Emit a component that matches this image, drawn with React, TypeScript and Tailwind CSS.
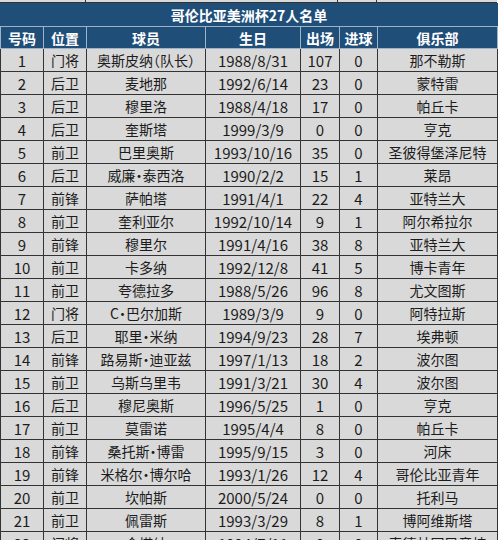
import React from "react";

type Player = [string, string, string, string, string, string, string];

const players: Player[] = [
  ["1", "门将", "奥斯皮纳（队长）", "1988/8/31", "107", "0", "那不勒斯"],
  ["2", "后卫", "麦地那", "1992/6/14", "23", "0", "蒙特雷"],
  ["3", "后卫", "穆里洛", "1988/4/18", "17", "0", "帕丘卡"],
  ["4", "后卫", "奎斯塔", "1999/3/9", "0", "0", "亨克"],
  ["5", "前卫", "巴里奥斯", "1993/10/16", "35", "0", "圣彼得堡泽尼特"],
  ["6", "后卫", "威廉·泰西洛", "1990/2/2", "15", "1", "莱昂"],
  ["7", "前锋", "萨帕塔", "1991/4/1", "22", "4", "亚特兰大"],
  ["8", "前卫", "奎利亚尔", "1992/10/14", "9", "1", "阿尔希拉尔"],
  ["9", "前锋", "穆里尔", "1991/4/16", "38", "8", "亚特兰大"],
  ["10", "前卫", "卡多纳", "1992/12/8", "41", "5", "博卡青年"],
  ["11", "前卫", "夸德拉多", "1988/5/26", "96", "8", "尤文图斯"],
  ["12", "门将", "C·巴尔加斯", "1989/3/9", "9", "0", "阿特拉斯"],
  ["13", "后卫", "耶里·米纳", "1994/9/23", "28", "7", "埃弗顿"],
  ["14", "前锋", "路易斯·迪亚兹", "1997/1/13", "18", "2", "波尔图"],
  ["15", "前卫", "乌斯乌里韦", "1991/3/21", "30", "4", "波尔图"],
  ["16", "后卫", "穆尼奥斯", "1996/5/25", "1", "0", "亨克"],
  ["17", "前卫", "莫雷诺", "1995/4/4", "8", "0", "帕丘卡"],
  ["18", "前锋", "桑托斯·博雷", "1995/9/15", "3", "0", "河床"],
  ["19", "前锋", "米格尔·博尔哈", "1993/1/26", "12", "4", "哥伦比亚青年"],
  ["20", "前卫", "坎帕斯", "2000/5/24", "0", "0", "托利马"],
  ["21", "前卫", "佩雷斯", "1993/3/29", "8", "1", "博阿维斯塔"],
  ["22", "门将", "金塔纳", "1994/7/11", "0", "0", "麦德林国民竞技"],
];

const heads = ["号码", "位置", "球员", "生日", "出场", "进球", "俱乐部"];

// columns holding Chinese text run a touch smaller than the digits
const cjkCols = [1, 2, 6];

export default function App() {
  return (
    <div className="w-[500px] h-[540px] overflow-hidden bg-white font-['Noto_Sans_CJK_SC','Noto_Sans',sans-serif] text-[15px] text-[#1c1c1c]">
      {/* tail of the table above */}
      <div className="flex h-[3px] w-[497px] bg-[#d9d9d9] border-b border-[#333]">
        <div className="w-[86px] border-r border-[#333]" />
        <div className="w-[252px] border-r border-[#333]" />
        <div className="w-[39px] border-r border-[#333]" />
        <div className="flex-1" />
      </div>
      <table className="table-fixed border-collapse w-[497px]">
        <colgroup>
          <col className="w-[43px]" />
          <col className="w-[43px]" />
          <col className="w-[119px]" />
          <col className="w-[95px]" />
          <col className="w-[39px]" />
          <col className="w-[38px]" />
          <col className="w-[120px]" />
        </colgroup>
        <thead>
          <tr>
            <th
              colSpan={7}
              className="h-[23px] p-0 bg-[#1f4e79] text-white text-[14px] font-bold leading-none border border-[#1f4e79] border-b-[#9fb3c8]"
            >
              哥伦比亚美洲杯27人名单
            </th>
          </tr>
          <tr>
            {heads.map((h) => (
              <th
                key={h}
                className="h-[22px] p-0 bg-[#1f4e79] text-white text-[14px] font-bold leading-none border border-[#9fb3c8]"
              >
                {h}
              </th>
            ))}
          </tr>
        </thead>
        <tbody>
          {players.map((p) => (
            <tr key={p[0]}>
              {p.map((v, i) => (
                <td
                  key={i}
                  className={
                    "h-[23px] p-0 bg-[#d9d9d9] border border-[#333] text-center leading-none whitespace-nowrap" +
                    (cjkCols.includes(i) ? " text-[14px]" : "") +
                    (i === 2 ? " [font-feature-settings:'halt']" : "")
                  }
                >
                  {v}
                </td>
              ))}
            </tr>
          ))}
        </tbody>
      </table>
    </div>
  );
}
